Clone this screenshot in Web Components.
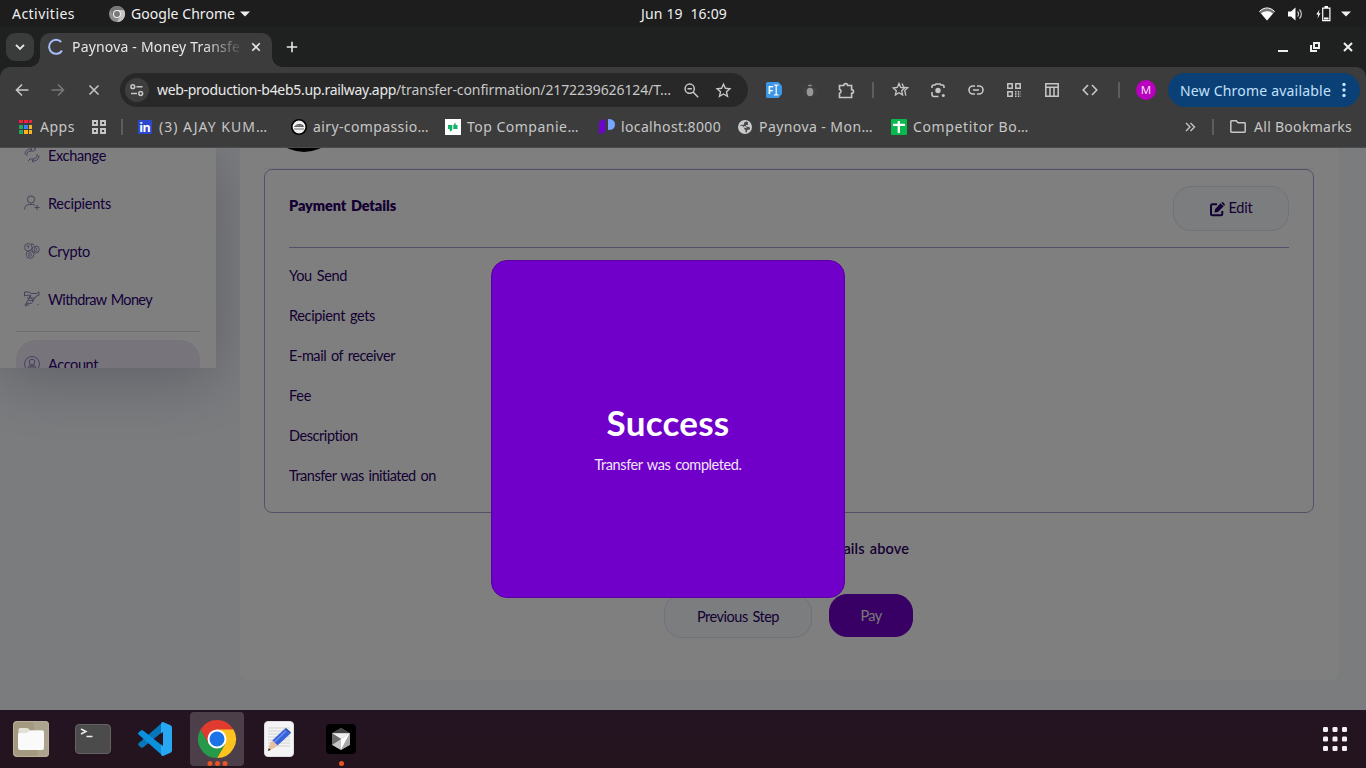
<!DOCTYPE html>
<html lang="en"><head><meta charset="utf-8"><title>Paynova - Money Transfer</title>
<style>html,body{margin:0;height:100%;overflow:hidden;background:#7b7c7e}body{font-family:"Noto Sans","Open Sans",sans-serif}</style></head>
<body><desktop-shell></desktop-shell>
<script>
const define=(name,html,css)=>{
  const t=document.createElement('template');
  t.innerHTML=`<style>*{box-sizing:border-box}${css}</style>${html}`;
  customElements.define(name,class extends HTMLElement{
    constructor(){super();this.attachShadow({mode:'open'}).append(t.content.cloneNode(true));}
  });
};

/* Single-line label whose tracking is adjusted to fill its width. */
class FitText extends HTMLElement{
  connectedCallback(){
    if(this.shadowRoot)return;
    const r=this.attachShadow({mode:'open'});
    r.innerHTML='<style>:host{display:inline-block;flex:none;white-space:pre}span{display:inline-block}</style><span><slot></slot></span>';
    const s=r.querySelector('span'),w=+this.getAttribute('w'),n=this.textContent.length;
    this.style.width=w+'px';
    s.style.letterSpacing=((w-s.getBoundingClientRect().width)/n)+'px';
  }
}
customElements.define('fit-text',FitText);

const S='fill="none" stroke="currentColor"';
const ICONS={
 caret:[10,6,'<path d="M0 0.5h10L5 5.5z" fill="currentColor"/>'],
 chromeMono:[16,16,'<circle cx="8" cy="8" r="8" fill="#8d8d8d"/><path d="M8 4h7A8 8 0 0 1 8 16l3.6-6z" fill="#c4c4c4"/><path d="M1.2 4A8 8 0 0 1 15 4H8L4.5 9.5z" fill="#777"/><circle cx="8" cy="8" r="4" fill="#eee"/><circle cx="8" cy="8" r="2.9" fill="#777"/>'],
 wifi:[16,14,'<path d="M0 4.6C4.5.2 11.500.2 16 4.600L8 13.500z" fill="#777"/><path d="M2 6.300C5.500 3.500 10.500 3.500 14 6.300L8 13.500z" fill="#fff"/><path d="M.4 4.500C5-.2 11-.2 15.600 4.500" fill="none" stroke="#fff"/>'],
 speaker:[16,14,'<path d="M0 4.500h3L7.500.5v13L3 9.500H0z" fill="#fff"/><path d="M9.500 4.500a3.500 3.500 0 0 1 0 5M11.500 2.500a6.500 6.500 0 0 1 0 9" fill="none" stroke="#ccc" stroke-width="1.200"/>'],
 battery:[15,16,'<path d="M3.500 3.500L.3 8.600h2L1.500 12.500 4.500 7.300H2.700z" fill="#fff"/><path d="M6.700 2.200h7.200v12.500H6.700z" fill="none" stroke="#fff" stroke-width="1.200"/><path d="M8.500 0h3.500v2H8.500zM8 11.500h4.500v2H8z" fill="#fff"/>'],
 down:[10,6,`<path d="M1 .8l4 4 4-4" ${S} stroke-width="1.900"/>`],
 spinner:[16,16,`<path d="M13.200 3A7 7 0 1 0 14 11.600" fill="none" stroke="#a8bdf8" stroke-width="2"/>`],
 x:[10,10,`<path d="M1.200 1.200l7.600 7.600M8.800 1.200L1.200 8.800" ${S} stroke-width="1.600"/>`],
 xwin:[10,10,'<path d="M1 1l8 8M9 1L1 9" fill="none" stroke="#eee" stroke-width="2"/>'],
 xbig:[12,12,`<path d="M1.500 1.500l9 9M10.500 1.500l-9 9" ${S} stroke-width="1.500"/>`],
 plus:[12,12,`<path d="M6 .8v10.400M.8 6h10.400" ${S} stroke-width="1.600"/>`],
 min:[10,12,'<path d="M0 9h10v2H0z" fill="#eee"/>'],
 restore:[10,10,'<path d="M4 1h5v5H4z" fill="none" stroke="#eee" stroke-width="2"/><path d="M1 3v6h6" fill="none" stroke="#eee" stroke-width="2"/>'],
 back:[14,14,`<path d="M13.500 7H1.500M7 1.500L1.500 7 7 12.500" ${S} stroke-width="1.600"/>`],
 fwd:[14,14,`<path d="M.5 7h12M7 1.500L12.500 7 7 12.500" ${S} stroke-width="1.600"/>`],
 tune:[24,24,`<circle cx="12" cy="12" r="12" fill="#3e3e3e"/><g ${S} stroke-width="1.500"><circle cx="7.800" cy="8.700" r="1.900"/><path d="M11.500 8.700h6M6 15.500h6"/><circle cx="15.700" cy="15.500" r="1.900"/></g>`],
 zoomout:[15,15,`<g ${S} stroke-width="1.500"><circle cx="5.700" cy="5.700" r="4.600"/><path d="M9 9l5.200 5.200M3.500 5.700h4.400"/></g>`],
 star:[15,15,`<path d="M7.500 1.200l1.900 4.100 4.500.5-3.400 3 1 4.500-4-2.300-4 2.300 1-4.500-3.400-3 4.500-.5z" ${S} stroke-width="1.400"/>`],
 fontx:[16,16,'<path d="M1.500 0h11L16 4v8l-3.500 4h-11Q0 16 0 14.500v-13Q0 0 1.500 0z" fill="#3d95e5"/><text x="1.500" y="12.300" font-size="11" font-weight="600" font-family="Noto Sans" fill="#fff">F</text><path d="M7.800 3h1.700l.7.700.7-.7h1.700M7.800 13h1.700l.7-.7.7.7h1.700M10.200 3.500v9" fill="none" stroke="#fff" stroke-width="1.200"/>'],
 bug:[14,14,'<path d="M0 4.500l4 2M0 8h4M1 12l3-2M14 4.500l-4 2M14 8h-4M13 12l-3-2" stroke="#484848"/><ellipse cx="7" cy="9" rx="3.300" ry="4.200" fill="#979797"/><path d="M4.500 3.300a2.600 2.600 0 0 1 5 0z" fill="#8a8a8a"/>'],
 puzzle:[17,17,`<path d="M1.500 3.500h4.300a1.900 1.900 0 0 1 3.800 0h4v4.100a1.900 1.900 0 0 1 0 3.800v4.100H1.500v-4.200a2 2 0 0 0 0-3.900z" ${S} stroke-width="1.600"/>`],
 stars:[17,16,`<g ${S} stroke-width="1.300"><path d="M7 1.500l1.700 4 4.100.5-3.100 2.800.9 4.200L7 10.800 3.400 13l.9-4.200L1.200 6l4.100-.5z"/><path d="M10 1.500L11.700 5.200l4 .6-3 2.800 1.200 5"/></g>`],
 lens:[15,15,`<path d="M1 5V3.500Q1 2 2.500 2H4l1-1h4l1 1h1.500Q13 2 13 3.500V5M1 9v2.500Q1 13.500 3 13.500h4.500" ${S} stroke-width="1.600"/><circle cx="7" cy="7.500" r="2.700" fill="currentColor"/><circle cx="12.300" cy="12.500" r="1.500" fill="currentColor"/>`],
 link:[16,10,`<path d="M7 1H5a4 4 0 0 0 0 8h2M9 1h2a4 4 0 0 1 0 8H9M5 5h6" ${S} stroke-width="1.600"/>`],
 qr:[14,14,`<g ${S} stroke-width="1.500"><path d="M.8.8h4.400v4.400H.8zM8.800.8h4.400v4.400H8.800zM.8 8.800h4.400v4.400H.8z"/><path d="M8 8.800h6M8 11h6M8 13.200h6" stroke-dasharray="1.500 1.300"/></g>`],
 table:[14,14,`<path d="M.8.8h12.400v12.400H.8zM.8 4.200h12.400M5 4.200v9M9 4.200v9" ${S} stroke-width="1.500"/>`],
 code:[16,12,`<path d="M6 1L1.200 6 6 11M10 1l4.800 5L10 11" ${S} stroke-width="1.600"/>`],
 sep:[2,16,'<path d="M0 0h2v16H0z" fill="#5c5d5d"/>'],
 dots:[4,16,'<g fill="currentColor"><circle cx="2" cy="2.500" r="1.700"/><circle cx="2" cy="8" r="1.700"/><circle cx="2" cy="13.500" r="1.700"/></g>'],
 apps:[14,14,'<path d="M0 0h4v3H0zM5 0h4v3H5zM10 0h3v3h-3z" fill="#f5203e"/><path d="M0 5h4v4H0zM0 10h4v4H0z" fill="#20a862"/><path d="M5 5h4v4H5z" fill="#3b82f6"/><path d="M10 5h3v4h-3zM5 10h4v4H5zM10 10h3v4h-3z" fill="#fbb41a"/>'],
 four:[14,14,`<path d="M1 1h4v4H1zM9 1h4v4H9zM1 9h4v4H1zM9 9h4v4H9z" ${S} stroke-width="1.900"/>`],
 linkedin:[14,14,'<path d="M0 0h14v14H0z" fill="#2d48cc"/><text x="1.200" y="11.600" font-size="12.500" font-weight="700" font-family="Open Sans" textLength="11.500" fill="#fff">in</text>'],
 airy:[16,16,'<circle cx="8" cy="8" r="7.200" fill="#f1f1f1" stroke="#000" stroke-width="1.600"/><path d="M3 8Q5 4.500 9.500 5q3 .5 3.500 3z" fill="#555"/><path d="M4 6.800h7" stroke="#aaa" stroke-width=".7"/><path d="M3 10h10" stroke="#888" stroke-width="1.200"/>'],
 quote:[16,16,'<path d="M0 0h16v16H0z" fill="#fff"/><path d="M3 6h4.300v3.500Q7.300 12.500 4.800 12.500V10H3zM12.500 10H8.300V6.500Q9.300 4 10.500 3.500V6h2z" fill="#12b26d"/>'],
 pay:[16,16,'<path d="M6.300 0v13Q3 13.500 0 16V4Q0 1 6.300 0z" fill="#6d04cb"/><path d="M9 0q7 0 7 5.500T9 11z" fill="#79a4ff"/>'],
 globe:[14,14,'<circle cx="7" cy="7" r="7" fill="#c8cacc"/><path d="M1.500 5.800h2.700l2 2v1.500l1.300.5v2.700l1.500-.3v-2l3-1V7.500L10 6.800 8 6.500V5h2V2.500L8.500 1.300 6 2.800v2H3.500z" fill="#3c3c3c" opacity=".9"/><path d="M5.500 5.800l2.500 1 .8 1.500-2.600-.5z" fill="#c8cacc"/>'],
 compet:[16,16,'<rect width="16" height="16" rx="1" fill="#08b94e"/><path d="M2 5.800h12M7.800 2v12" stroke="#fff" stroke-width="2.300"/>'],
 more:[10,10,`<path d="M1 1l4 4-4 4M5.500 1l4 4-4 4" ${S} stroke-width="1.400"/>`],
 folder:[16,13,`<path d="M.8 1.500Q.8.800 1.500.8h4.700L8 2.800h6.500q.7 0 .7.700v8q0 .7-.7.700h-13q-.7 0-.7-.7z" ${S} stroke-width="1.500"/>`],
 exchange:[16,16,`<g ${S} stroke-width="1"><path d="M1 7.500Q1 2 7 2h1L6.500.5M8 2L6.500 3.800M3 9q-1-4.500 4-5h3l2-2-3-1.500"/><path d="M15 8.500Q15 14 9 14H8l1.500 1.500M8 14l1.500-1.800M13 7q1 4.500-4 5H6L4 14"/></g>`],
 recipient:[16,16,`<g ${S}><circle cx="7" cy="4.500" r="3.600"/><path d="M.6 14.500q0-5 5-5h3q1.500 0 2.500.7M13 10v5M10.500 12.500h5"/></g>`],
 crypto:[16,16,`<g ${S} stroke-width=".9"><circle cx="4.300" cy="4.300" r="3.800"/><circle cx="11.700" cy="6.500" r="3.600"/><circle cx="6" cy="11.500" r="3.900"/><path d="M10.700 4.500v4h1.500q1.500-1 0-2 1-1.500-.3-2zM4.800 9.800h2q1.200 1.500 0 3.400h-2zM2.500 3h3M4.300 3v2.500M7 1l3 .5"/></g>`],
 withdraw:[16,16,`<g ${S} stroke-width="1"><path d="M.5 1h4.500l2 1.500h6L15 .8v3.500l-3 1-4.500 7H2l5-8H2L.5 5zM2 12.500v3M.5 14h4.500"/><path d="M5 5l4 4M3 7h8M4.500 9.500h5M13.500 13.500h1"/></g>`],
 account:[16,16,`<g ${S} stroke-width="1"><circle cx="8" cy="8" r="7.500"/><circle cx="8" cy="6" r="2.800"/><path d="M4 13.500V12q.5-3 4-3t4 3v1.500M6 13v-2h4v2"/></g>`],
 edit:[15,14,`<path d="M7 2.200H2.500q-1.500 0-1.500 1.500V12q0 1.200 1.500 1.200h8.300q1.500 0 1.500-1.200V9" ${S} stroke-width="2"/><path d="M5 7.200L10.500 1.300l3.200 2.900L8 10l-3.500.5zM11.300.6q1-1 2 0l1.200 1.200q.7 1 0 1.800l-.3.300z" fill="currentColor"/>`],
 files:[36,36,'<rect width="36" height="36" rx="4" fill="#a3997f"/><path d="M20 0h12q4 0 4 4v28q0 4-4 4h-7z" fill="#aca48e"/><rect x=".5" y=".5" width="35" height="35" rx="4" fill="none" stroke="#b7af98"/><path d="M5.500 8.500Q5.500 7 7 7h7q2 0 3 2.500h12q1.500 0 1.500 1.500v3h-25z" fill="#e3e0d6"/><path d="M5 13q0-1 1.500-1H14l3-2.500h12.500q1.500 0 1.500 1.500V27q0 2-2 2H7q-2 0-2-2z" fill="#fafafa"/>'],
 terminal:[36,30,'<rect x=".5" y=".5" width="35" height="29" rx="3.500" fill="#4b4b4b" stroke="#626262"/><path d="M6 5l5 2.500L6 10M11.500 12.500h6" fill="none" stroke="#eee" stroke-width="1.400"/>'],
 vscode:[34,34,'<path d="M25 0l-.5 10L5 25.500q-1 .8-2 0L.5 23.300q-1-1 0-2z" fill="#0877b9"/><path d="M.5 12.500q-1-1 0-2L3 8.400q1-.8 2 0L25 24v10z" fill="#0b90dc"/><path d="M25 0l7.500 3.200q1.500.7 1.500 2.300v23q0 1.600-1.500 2.300L25 34q-2 0-2-2V2q0-2 2-2z" fill="#28a8f2"/><path d="M25 10v14l-9-7z" fill="#23141f"/>'],
 chrome:[38,38,'<path d="M19 19L2.540 9.500A19 19 0 0 1 35.460 9.500z" fill="#e13b30"/><path d="M19 9.500h16.460A19 19 0 0 1 19 38l8.230-14.250z" fill="#fcc31e"/><path d="M2.540 9.500l8.230 14.250L19 28.500 27.230 23.750 19 38A19 19 0 0 1 2.540 9.500z" fill="#279a49"/><path d="M2.540 9.500L10.770 23.750 19 9.500z" fill="#e13b30"/><circle cx="19" cy="19" r="9.500" fill="#fff"/><circle cx="19" cy="19" r="7.500" fill="#1a73e8"/>'],
 editor:[30,36,'<rect x=".5" y=".5" width="29" height="35" rx="3.500" fill="#f4f4f4" stroke="#ddd"/><path d="M4 7h22M4 10h22M4 13h22M4 16h22M4 19h22M4 22h22M4 25h22" stroke="#d2d2d2"/><path d="M20.500 8l5.500 5L13.500 24.500l-5.200-5z" fill="#3762dc"/><path d="M22 10L10 21.500" stroke="#6991f2" stroke-width="1.600"/><path d="M20.500 8l1.500-1 5 4.500-1 1.500z" fill="#2447a6"/><path d="M8.300 19.500l5.200 5-2.500 2L4 30l2.300-8.500z" fill="#e8c09d"/><path d="M4.800 27.200L4 30l2.800-1.200z" fill="#222"/>'],
 cursor:[30,30,'<rect width="30" height="30" rx="4" fill="#000"/><path d="M15 4l9 5.300v11.400L15 26l-9-5.300V9.300z" fill="#8a8a8a"/><path d="M15 4l9 5.300H6z" fill="#444"/><path d="M6 9.300h18L15 15z" fill="#eee"/><path d="M24 9.300L15 26V15z" fill="#fff"/><path d="M24 9.300v11.400L15 26z" fill="#a8a8a8"/><path d="M6 20.700l9-5.700v11z" fill="#c5c5c5"/><path d="M6 9.300v11.400l9-5.700z" fill="#6c6c6c"/>'],
 launcher:[24,24,[0,1,2].map(r=>[0,1,2].map(c=>`<rect x="${c*9.500}" y="${r*9.500}" width="5" height="5" rx="1.200" fill="#f4f0f3"/>`).join('')).join('')]
};
class UiIcon extends HTMLElement{
  connectedCallback(){
    if(this.shadowRoot)return;
    const [w,h,b]=ICONS[this.getAttribute('name')];
    this.attachShadow({mode:'open'}).innerHTML=`<style>:host{display:block;flex:none;width:${w}px;height:${h}px}svg{display:block;overflow:visible}</style><svg width="${w}" height="${h}" viewBox="0 0 ${w} ${h}">${b}</svg>`;
  }
}
customElements.define('ui-icon',UiIcon);
const i=(n,m=0,st='')=>`<ui-icon name="${n}" style="margin-left:${m}px;${st}"></ui-icon>`;
const t=(s,w,m=0,st='')=>`<fit-text w="${w}" style="margin-left:${m}px;${st}">${s}</fit-text>`;

define('system-bar',`${t('Activities',63,12)}${i('chromeMono',34)}${t('Google Chrome',104,6)}${i('caret',5)}
${t('Jun 19&nbsp; 16:09',86,391)}<div class="r">${i('wifi')}${i('speaker',13)}${i('battery',12)}${i('caret',10)}</div>`,
`:host{display:flex;align-items:center;height:27px;background:#1d1d1d;color:#f0f0f0;font-size:14px;line-height:27px}.r{display:flex;align-items:center;margin-left:auto;padding-right:15px}`);

define('tab-strip',`<div class="drop">${i('down')}</div><div class="tab">${i('spinner',8)}<div class="ttl">${t('Paynova - Money Transfe',168)}</div>${i('x',11)}</div>${i('plus',14,'margin-top:14px')}
<div class="w">${i('min')}${i('restore',22)}${i('xwin',23)}</div>`,
`:host{display:flex;height:40px;background:#1f2120;color:#e6e6e6;font-size:14px}
.drop{width:28px;height:28px;border-radius:9px;background:#3a3b3b;margin:6px 6px 0;display:grid;place-items:center}
.tab{position:relative;width:232px;height:34px;margin-top:6px;background:#3c3c3c;border-radius:10px 10px 0 0;display:flex;align-items:center;padding-bottom:6px}
.tab:before,.tab:after{content:"";position:absolute;bottom:0;width:10px;height:10px;background:radial-gradient(circle at 0 0,transparent 9.500px,#3c3c3c 10px)}
.tab:before{left:-10px}.tab:after{right:-10px;transform:scaleX(-1)}
.ttl{width:168px;margin-left:8px;-webkit-mask:linear-gradient(90deg,#000 78%,transparent 103%);line-height:24px}
.w{display:flex;align-items:center;margin-left:auto;padding-right:13px}`);

define('address-bar',`${i('back',15)}${i('fwd',22,'color:#777')}${i('xbig',23)}
<div class="omni">${i('tune',5)}<span class="u">${t('web-production-b4eb5.up.railway.app',239,0,'color:#e8e8e8')}${t('/transfer-confirmation/2172239626124/T…',275)}</span>${i('zoomout',13)}${i('star',17)}</div>
${i('fontx',18)}${i('bug',21)}${i('puzzle',21)}${i('sep',17)}${i('stars',18)}${i('lens',22)}${i('link',22)}${i('qr',23)}${i('table',24)}${i('code',23)}${i('sep',20)}
<div class="av">M</div><div class="upd">${t('New Chrome available',151,12)}${i('dots',11)}</div>`,
`:host{display:flex;align-items:center;height:46px;background:#3c3c3c;color:#c7c7c7;font-size:14px;border-radius:10px 10px 0 0}
.omni{width:628px;height:34px;border-radius:17px;background:#282828;margin-left:20px;display:flex;align-items:center}
.u{display:flex;margin-left:8px;line-height:34px}
.av{width:20px;height:20px;border-radius:50%;background:#b900be;color:#f5dff5;font-size:11.500px;line-height:20px;text-align:center;margin-left:16px}
.upd{width:192px;height:34px;border-radius:17px;background:#0b4077;color:#c2e1fb;display:flex;align-items:center;margin-left:12px;font-size:14px}`);

define('bookmark-bar',`${i('apps',19)}${t('Apps',35,7)}${i('four',17)}${i('sep',15)}${i('linkedin',15)}${t('(3) AJAY KUM…',109,7)}${i('airy',23)}${t('airy-compassio…',116,6)}${i('quote',16)}${t('Top Companie…',112,6)}${i('pay',20)}${t('localhost:8000',100,6)}${i('globe',17)}${t('Paynova - Mon…',114,7)}${i('compet',18)}${t('Competitor Bo…',116,6)}
<div class="r">${i('more')}${i('sep',17)}${i('folder',16)}${t('All Bookmarks',98,8)}</div>`,
`:host{display:flex;align-items:center;height:35px;padding-bottom:7px;background:#3c3c3c;color:#c7c7c7;font-size:14px;line-height:28px;border-bottom:1px solid #4a4c4b}.r{display:flex;align-items:center;margin-left:auto;padding-right:14px}`);

define('nav-item','<slot name="icon"></slot><slot></slot>',`:host{display:flex;align-items:center;gap:8px;height:48px;padding:0 8px;color:#2c0074;border-radius:20px}::slotted(ui-icon){color:#9282ba}::slotted(fit-text){margin-top:1px}`);
const nav=(n,s,w)=>`<nav-item><ui-icon slot="icon" name="${n}"></ui-icon><fit-text w="${w}">${s}</fit-text></nav-item>`;
define('side-nav',`<div class="list">${nav('exchange','Exchange',58)}${nav('recipient','Recipients',63)}${nav('crypto','Crypto',42)}${nav('withdraw','Withdraw Money',104)}<hr><div class="act">${nav('account','Account',50)}</div></div>`,
`:host{display:block;width:216px;height:220px;flex:none;background:#fff;box-shadow:0 10px 60px rgba(65,67,105,.33)}
.list{height:220px;overflow:hidden;padding:0 16px}nav-item:first-child{margin-top:-17px}
hr{border:0;border-top:1px solid #dcd8e4;margin:8px 0}.act nav-item{background:#efe8f8;margin:0}`);

define('pill-button','<slot></slot>',`:host{display:flex;align-items:center;justify-content:center;gap:4px;border:1px solid #e0e2f6;border-radius:18px;background:#f7faff;color:#2b0066}
:host([primary]){background:#7000c9;border-color:#7000c9;color:#eee}`);

define('payment-details',`<header>${t('Payment Details',107,0,'font-weight:800;margin-top:9px')}<pill-button>${i('edit')}${t('Edit',24,0,'margin-top:-2px')}</pill-button></header>
${[['You Send',58],['Recipient gets',86],['E-mail of receiver',106],['Fee',22],['Description',69],['Transfer was initiated on',147]].map(r=>`<div>${t(...r)}</div>`).join('')}`,
`:host{display:block;height:344px;border:1px solid #aba1d0;border-radius:8px;padding:16px 24px;color:#2b0066}
header{display:flex;justify-content:space-between;align-items:flex-start;height:62px;border-bottom:1px solid #aaa1cf;margin-bottom:8px;line-height:22px}
pill-button{width:116px;height:45px}div{height:40px;line-height:40px}`);

define('success-modal',`<h1>${t('Success',123)}</h1><p>${t('Transfer was completed.',147)}</p>`,
`:host{display:flex;flex-direction:column;align-items:center;width:354px;height:338px;border:1px solid #5a00a3;border-radius:16px;background:#7000c9;color:#fff}
h1{margin:138px 0 0;font-size:35px;font-weight:700;line-height:46px}p{margin:9px 0 0;line-height:22px;color:#f1e6fa}`);

define('transfer-page',`<side-nav></side-nav><main><svg class="logo" width="40" height="5"><circle cx="20" cy="-34" r="38"/></svg><hr>
<payment-details></payment-details><section class="note">${t('details above',87)}</section>
<footer><pill-button class="prev">${t('Previous Step',82)}</pill-button><pill-button primary class="pay">${t('Pay',21)}</pill-button></footer></main>
<div class="shade"></div><success-modal></success-modal>`,
`:host{position:relative;display:flex;align-items:flex-start;gap:24px;height:562px;overflow:hidden;background:#f7f9fd;font-family:Lato,"Open Sans",sans-serif;font-size:14.500px;word-spacing:1.500px}
main{position:relative;width:1098px;height:532px;padding:0 24px;background:#fff;border-radius:0 0 8px 8px}
.logo{display:block;margin-left:20px}hr{border:0;border-top:1px solid #f0eef4;margin:15px 0 0}
.note{display:flex;justify-content:flex-end;padding-right:405px;margin-top:25px;line-height:22px;font-weight:600;color:#2b0066}
footer{display:flex;gap:17px;margin:34px 0 0 400px}.prev{width:148px;height:44px}.pay{width:84px;height:43px}
.shade{position:absolute;inset:0;background:rgba(0,0,0,.5)}success-modal{position:absolute;left:491px;top:112px}`);

define('dock-item','<slot></slot>',`:host{position:relative;display:grid;place-items:center;width:54px;height:54px;margin-right:8px;border-radius:4px}:host([active]){background:#4c3f49}
:host([running]):after{content:"";position:absolute;left:24.500px;bottom:.5px;width:5px;height:5px;border-radius:50%;background:#e95420}:host([active]):after{box-shadow:-7.500px 0 #e95420,7.500px 0 #e95420}`);
define('dock-bar',`<dock-item>${i('files')}</dock-item><dock-item>${i('terminal')}</dock-item><dock-item>${i('vscode')}</dock-item><dock-item active running>${i('chrome')}</dock-item><dock-item>${i('editor')}</dock-item><dock-item running>${i('cursor')}</dock-item><div>${i('launcher')}</div>`,
`:host{display:flex;height:58px;padding:2px 19px 2px 4px;align-items:center;background:linear-gradient(#241423,#23141d)}div{margin-left:auto}`);

define('desktop-shell','<system-bar></system-bar><div><tab-strip></tab-strip><address-bar></address-bar><bookmark-bar></bookmark-bar></div><transfer-page></transfer-page><dock-bar></dock-bar>',
`:host{display:block;width:1366px;height:768px;overflow:hidden}div{background:#1f2120}`);
</script></body></html>
